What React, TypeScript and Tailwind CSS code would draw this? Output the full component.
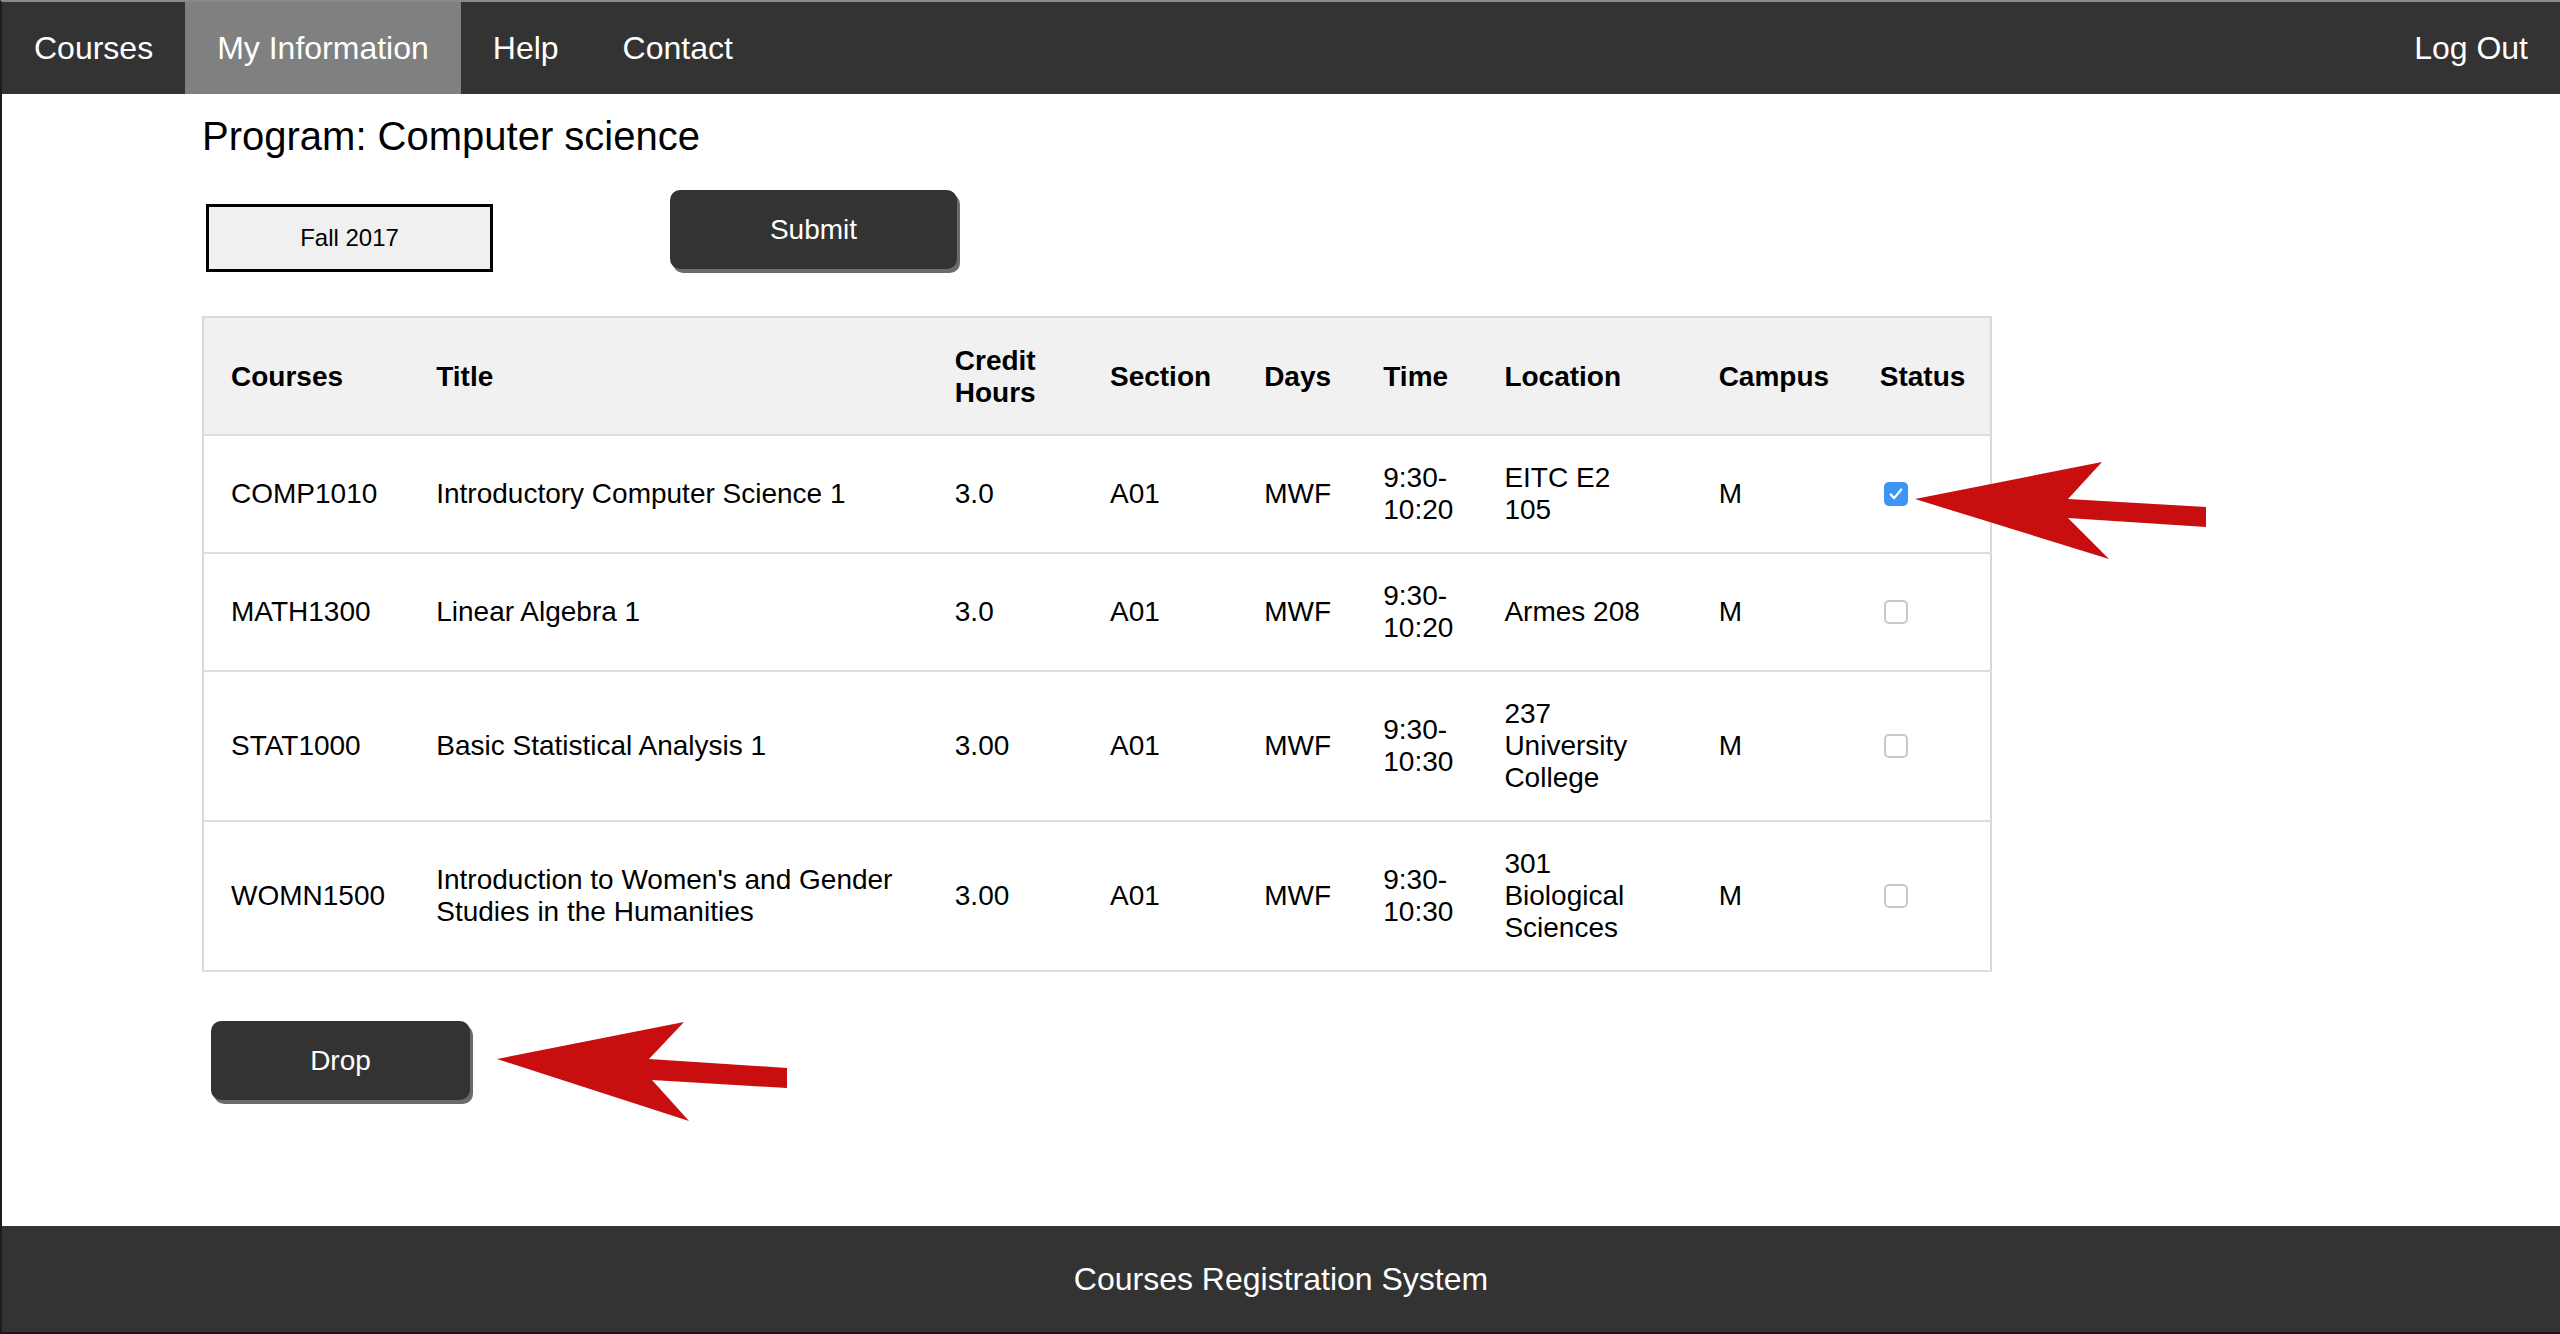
import React from 'react';

type Course = {
  code: string;
  title: string;
  credit: string;
  section: string;
  days: string;
  time: string;
  location: string;
  campus: string;
  checked: boolean;
};

// Registered courses for the selected term
const courses: Course[] = [
  { code: 'COMP1010', title: 'Introductory Computer Science 1', credit: '3.0', section: 'A01', days: 'MWF', time: '9:30-\n10:20', location: 'EITC E2\n105', campus: 'M', checked: true },
  { code: 'MATH1300', title: 'Linear Algebra 1', credit: '3.0', section: 'A01', days: 'MWF', time: '9:30-\n10:20', location: 'Armes 208', campus: 'M', checked: false },
  { code: 'STAT1000', title: 'Basic Statistical Analysis 1', credit: '3.00', section: 'A01', days: 'MWF', time: '9:30-\n10:30', location: '237\nUniversity\nCollege', campus: 'M', checked: false },
  { code: 'WOMN1500', title: "Introduction to Women's and Gender\nStudies in the Humanities", credit: '3.00', section: 'A01', days: 'MWF', time: '9:30-\n10:30', location: '301\nBiological\nSciences', campus: 'M', checked: false },
];

const navItems = ['Courses', 'My Information', 'Help', 'Contact'];

function Checkbox({ checked }: { checked: boolean }) {
  if (checked) {
    return (
      <span className="ml-[4px] flex h-[24px] w-[24px] items-center justify-center rounded-[5px] bg-[#3d95f4]">
        <svg viewBox="0 0 24 24" className="h-[18px] w-[18px]" fill="none" stroke="white" strokeWidth="3" strokeLinecap="round" strokeLinejoin="round">
          <path d="M5 12.5l4.5 5L19 6" />
        </svg>
      </span>
    );
  }
  return <span className="ml-[4px] block h-[24px] w-[24px] rounded-[5px] border-2 border-[#c9c9c9] bg-white" />;
}

function DarkButton({ label, width }: { label: string; width: string }) {
  return (
    <button
      className={`${width} h-[79px] rounded-[10px] bg-[#333333] text-[28px] text-white shadow-[3px_4px_0_#6b6b6b]`}
    >
      {label}
    </button>
  );
}

export default function App() {
  return (
    <div className="relative flex min-h-screen flex-col border-l-2 border-t-2 border-b-2 border-l-[#1c1c1c] border-t-[#8a8a8a] border-b-[#161616] bg-white font-['Liberation_Sans',Arial,sans-serif] text-black">
      {/* Top navigation */}
      <nav className="flex h-[92px] items-stretch bg-[#333333] text-[32px] text-white">
        {navItems.map((item) => (
          <a
            key={item}
            className={`flex items-center px-8 ${item === 'My Information' ? 'bg-[#808080]' : ''}`}
          >
            {item}
          </a>
        ))}
        <a className="ml-auto flex items-center px-8">Log Out</a>
      </nav>

      <main className="pl-[198px]">
        <h1 className="ml-[2px] mt-[19px] text-[40px] leading-[46px]">Program: Computer science</h1>

        <div className="mt-[31px] flex items-start">
          <div className="ml-[6px] mt-[14px] flex h-[68px] w-[287px] items-center justify-center border-[3px] border-black bg-[#f0f0f0] text-[24px]">
            Fall 2017
          </div>
          <div className="ml-[177px]">
            <DarkButton label="Submit" width="w-[287px]" />
          </div>
        </div>

        <table className="ml-[2px] mt-[44px] w-[1790px] table-fixed border-collapse border-2 border-[#d9d9d9] text-[28px] leading-[32px]">
          <colgroup>
            <col className="w-[206px]" />
            <col className="w-[518px]" />
            <col className="w-[155px]" />
            <col className="w-[154px]" />
            <col className="w-[119px]" />
            <col className="w-[121px]" />
            <col className="w-[214px]" />
            <col className="w-[161px]" />
            <col className="w-[138px]" />
          </colgroup>
          <thead>
            <tr className="border-b-2 border-[#dddddd] bg-[#f1f1f1] text-left font-bold">
              <th className="px-[27px] pb-[25px] pt-[27px] align-middle">Courses</th>
              <th className="px-[27px] pb-[25px] pt-[27px] align-middle">Title</th>
              <th className="whitespace-pre-line px-[27px] pb-[25px] pt-[27px] align-middle">{'Credit\nHours'}</th>
              <th className="px-[27px] pb-[25px] pt-[27px] align-middle">Section</th>
              <th className="px-[27px] pb-[25px] pt-[27px] align-middle">Days</th>
              <th className="px-[27px] pb-[25px] pt-[27px] align-middle">Time</th>
              <th className="px-[27px] pb-[25px] pt-[27px] align-middle">Location</th>
              <th className="px-[27px] pb-[25px] pt-[27px] align-middle">Campus</th>
              <th className="px-[27px] pb-[25px] pt-[27px] align-middle">Status</th>
            </tr>
          </thead>
          <tbody>
            {courses.map((c) => (
              <tr key={c.code} className="border-b-2 border-[#dddddd] bg-white">
                <td className="px-[27px] py-[26px] align-middle">{c.code}</td>
                <td className="whitespace-pre-line px-[27px] py-[26px] align-middle">{c.title}</td>
                <td className="px-[27px] py-[26px] align-middle">{c.credit}</td>
                <td className="px-[27px] py-[26px] align-middle">{c.section}</td>
                <td className="px-[27px] py-[26px] align-middle">{c.days}</td>
                <td className="whitespace-pre-line px-[27px] py-[26px] align-middle">{c.time}</td>
                <td className="whitespace-pre-line px-[27px] py-[26px] align-middle">{c.location}</td>
                <td className="px-[27px] py-[26px] align-middle">{c.campus}</td>
                <td className="px-[27px] py-[26px] align-middle">
                  <Checkbox checked={c.checked} />
                </td>
              </tr>
            ))}
          </tbody>
        </table>

        <div className="ml-[11px] mt-[49px]">
          <DarkButton label="Drop" width="w-[259px]" />
        </div>
      </main>

      <footer className="mt-auto flex h-[106px] items-center justify-center bg-[#333333] text-[32px] text-white">
        Courses Registration System
      </footer>

      {/* Red annotation arrows drawn over the page */}
      <svg className="pointer-events-none absolute left-[-2px] top-[-2px] h-[1334px] w-[2560px]" viewBox="0 0 2560 1334">
        <polygon
          fill="#c90e10"
          points="1915,499 2102,462 2068,499 2206,507 2206,527 2068,518 2109,559"
        />
        <polygon
          fill="#c90e10"
          points="497,1059 684,1022 649,1059 787,1068 787,1088 652,1080 689,1121"
        />
      </svg>
    </div>
  );
}
